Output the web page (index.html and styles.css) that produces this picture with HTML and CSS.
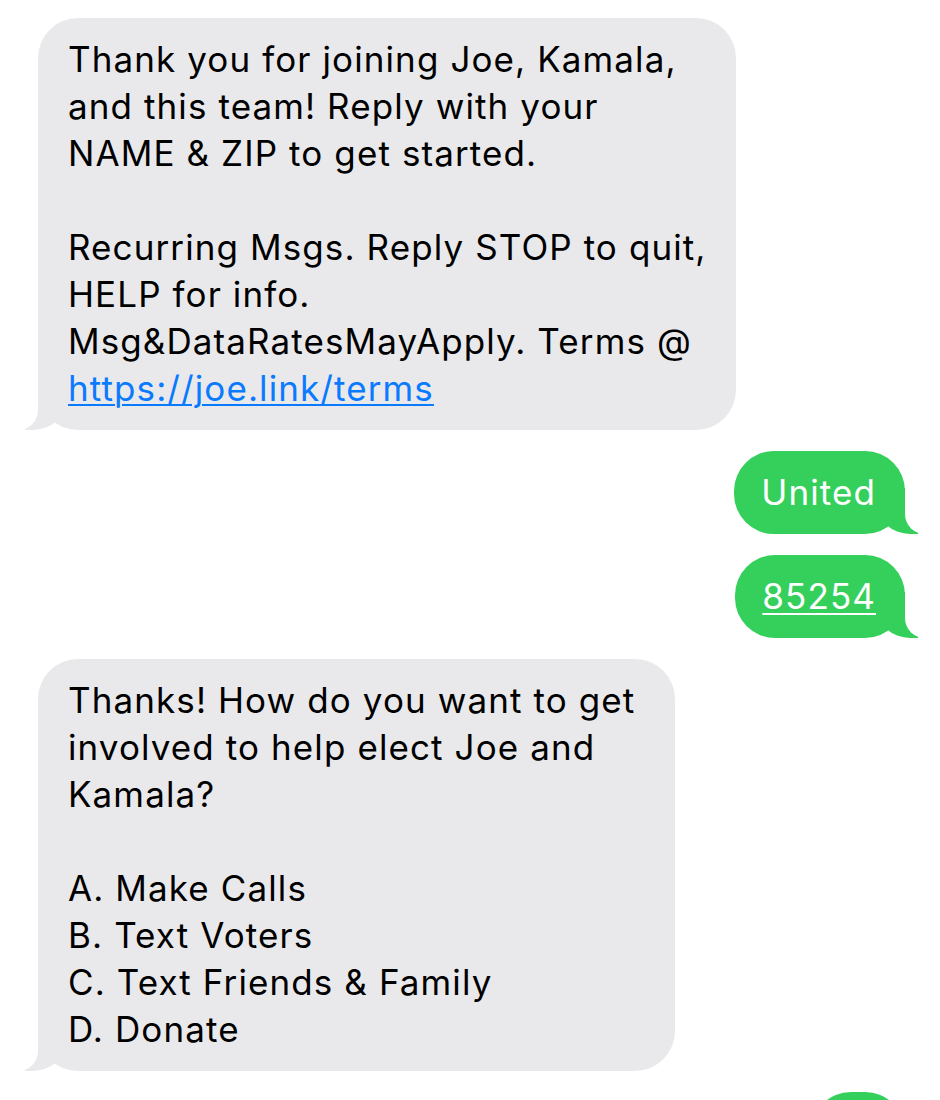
FILE: index.html
```html
<!DOCTYPE html>
<html>
<head>
<meta charset="utf-8">
<link rel="stylesheet" href="styles.css">
</head>
<body>
<div class="thread">
  <div class="bubble in">Thank you for joining Joe, Kamala,<br>and this team! Reply with your<br>NAME &amp; ZIP to get started.<br><br>Recurring Msgs. Reply STOP to quit,<br>HELP for info.<br>Msg&amp;DataRatesMayApply. Terms @<br><a class="link" href="#">https://joe.link/terms</a></div>
  <div class="bubble out">United</div>
  <div class="bubble out"><span class="u">85254</span></div>
  <div class="bubble in roomy">Thanks! How do you want to get<br>involved to help elect Joe and<br>Kamala?<br><br>A. Make Calls<br>B. Text Voters<br>C. Text Friends &amp; Family<br>D. Donate</div>
  <div class="bubble out last"></div>
</div>
</body>
</html>
```
FILE: styles.css
```css
html, body {
  margin: 0;
  padding: 0;
  background: #ffffff;
}
body {
  width: 940px;
  height: 1100px;
  overflow: hidden;
}
.thread {
  display: flex;
  flex-direction: column;
  gap: 21px;
  padding-top: 18px;
  font-family: "Inter", "Liberation Sans", sans-serif;
  font-size: 35px;
  letter-spacing: 1.1px;
  line-height: 47px;
  color: #000;
}
.bubble {
  position: relative;
  width: fit-content;
  padding: 18px 29px 18px 30px;
  border-radius: 40px;
  white-space: nowrap;
}
.in {
  align-self: flex-start;
  margin-left: 38px;
  background: #e9e9eb;
}
.roomy {
  padding-right: 40px;
}
.out {
  align-self: flex-end;
  margin-right: 35px;
  background: #35d05c;
  color: #fff;
  padding: 18px 29px 18px 27px;
}
.in::before, .in::after, .out::before, .out::after {
  content: "";
  position: absolute;
  bottom: 0;
  height: 46px;
}
.in::before {
  left: -13px;
  width: 40px;
  background: #e9e9eb;
  border-bottom-right-radius: 32px 28px;
}
.in::after {
  left: -50px;
  width: 50px;
  background: #fff;
  border-bottom-right-radius: 20px;
}
.out::before {
  right: -13px;
  width: 40px;
  background: #35d05c;
  border-bottom-left-radius: 32px 28px;
}
.out::after {
  right: -50px;
  width: 50px;
  background: #fff;
  border-bottom-left-radius: 20px;
}
.link {
  color: #0a7aff;
  text-decoration: underline;
  text-underline-offset: 3px;
  text-decoration-thickness: 2px;
}
.u {
  text-decoration: underline;
  text-underline-offset: 4px;
  text-decoration-thickness: 2px;
}
.last {
  width: 38px;
  height: 47px;
}
```
